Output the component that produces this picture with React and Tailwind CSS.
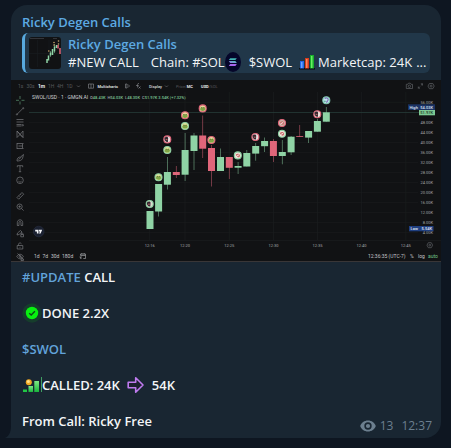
const UP = "#8fd3a5";
const DOWN = "#e0667a";

// [centre x, body top, body bottom, wick top, wick bottom, rising]
const candles = [
  [150, 211, 229, 211, 229, true],
  [158.6, 184, 211.5, 184, 216.5, true],
  [167.4, 172, 184.7, 157, 189.5, true],
  [176.3, 172, 175, 166, 178, false],
  [185.1, 150, 174.7, 133, 181, true],
  [194, 135.5, 151, 133, 170, true],
  [202.7, 135.5, 148.7, 115.5, 158, false],
  [211.5, 148, 171, 145, 186.5, false],
  [220.5, 157, 171, 148.5, 171, true],
  [229.3, 157, 167.8, 157, 179, false],
  [238.1, 166, 167.7, 162, 174, true],
  [246.8, 153, 166.5, 150, 166.5, true],
  [255.7, 146, 153.6, 143, 160.7, true],
  [264.6, 141, 146.2, 137.5, 152, true],
  [273.4, 141, 156, 139, 162, false],
  [282.3, 152, 156, 140, 164.3, true],
  [291.1, 136.7, 152.3, 136, 155, true],
  [299.7, 136.2, 137, 125, 137, false],
  [308.6, 131, 137.6, 131, 143, true],
  [317.4, 121, 131.7, 119, 131.7, true],
  [326.3, 112.3, 121.7, 107, 121.7, true],
];

// [x, y, ring, face, detail]
const markers = [
  [149.7, 204, UP, "#d9dccf", "mask"],
  [158.5, 177.2, UP, "#dfe39a", "frog"],
  [167.3, 150, UP, "#dfe39a", "frog"],
  [167.3, 139.4, DOWN, "#e8dfe0", "mask"],
  [185, 126, UP, "#dfe39a", "frog"],
  [185, 115.3, DOWN, "#e9d69a", "frog"],
  [202.7, 108.4, DOWN, "#e9d69a", "frog"],
  [211.4, 140, DOWN, "#e9d69a", "frog"],
  [237.8, 155.4, UP, "#efe3dc", "pink"],
  [255.4, 137, DOWN, "#e8dfe0", "mask"],
  [282, 123, DOWN, "#cbbcae", "pink"],
  [282, 133.8, UP, "#efe3dc", "pink"],
  [317.3, 114.2, DOWN, "#efe3dc", "mask"],
  [326.3, 100.3, "#7fc9b0", "#bfe3ea", "blue"],
];

const prices = [
  ["56.00K", 102.3], ["48.00K", 122.4], ["44.00K", 132.4], ["40.00K", 142.4],
  ["36.00K", 152.4], ["32.00K", 162.4], ["28.00K", 172.4], ["24.00K", 182.4],
  ["20.00K", 192.4], ["16.00K", 202.4], ["12.00K", 212.4], ["8.00K", 222.4], ["4.00K", 232.4],
];

const times = [
  ["12:16", 149.7], ["12:20", 185], ["12:25", 229.3], ["12:30", 273.5],
  ["12:35", 317.5], ["12:40", 361.6], ["12:45", 405.8],
];

function Marker({ x, y, ring, face, detail }) {
  return (
    <g transform={`translate(${x} ${y})`}>
      <circle r="3.5" fill={face} stroke={ring} strokeWidth="1.100" />
      {detail === "frog" && (
        <>
          <path d="M-2.6 .4c.8-1.6 4.2-1.8 5.1-.2.3 1.3-.9 2.4-2.5 2.4S-2.8 1.700-2.600.4Z" fill="#7fa546" />
          <path d="M-1.900-.8h1.500M.5-.8h1.400" stroke="#5c6a35" strokeWidth=".8" />
        </>
      )}
      {detail === "mask" && (
        <>
          <path d="M-2.800-1.400C-1.500-3 .5-3 .8-1.500L.6 2.500C-1.400 3-3.200 1-2.800-1.400Z" fill="#33272f" />
          <path d="M-1.600.2h1.700" stroke="#d56a6a" strokeWidth=".9" />
        </>
      )}
      {detail === "pink" && (
        <>
          <path d="M-2-.8C-1-2.200 2-2 2.200 0c0 1.500-1 2-2 1.800-.8-.2-2.400-1.200-2.200-2.600Z" fill="#c96f6c" />
          <path d="M-1.500.9 1.200-.6" stroke="#fff" strokeWidth=".8" />
        </>
      )}
      {detail === "blue" && (
        <>
          <path d="M-1.600-1.600C-.5-3 2-2.400 1.900-.6 1.800.8.300.7.300 2.400" fill="none" stroke="#7a6fb5" strokeWidth="1.100" />
          <circle cx="-1.400" cy="1" r=".9" fill="#5fae9a" />
        </>
      )}
    </g>
  );
}

function DrawingTools() {
  return (
    <g fill="none" stroke="#77797d" strokeWidth=".7">
      <path d="M20 96v3M20 101.500v3M16 100.300h3M21.500 100.300h3" stroke="#5f9a76" />
      <path d="M17.300 114 22.700 108.600" />
      <circle cx="16.900" cy="114.400" r=".6" />
      <circle cx="23.200" cy="108.200" r=".6" />
      <path d="M16.500 119.500h7M16.500 122h7M16.500 124.500h5M16.500 126h5" />
      <circle cx="22.800" cy="125.200" r=".7" />
      <path d="M17 137.500v-6.500l3 3.500 3-3.500v6.500l-3-3-3 3ZM17 131l6 6.500" />
      <path d="M17 143v6M17 143.500h6.500M17 148.500h6.500M18.500 146h4M22.500 144v4" />
      <path d="M17 161c0-3 1.500-4 3.500-4l3-2.500-1 4c-1 2-3 2.500-5.500 2.500ZM18.500 159.500l3-2.500" />
      <path d="M17.300 167.200v-1.500h5.400v1.500M20 165.700v6M18.800 171.700h2.400" />
      <circle cx="20" cy="180.300" r="3.300" />
      <path d="M18.500 181.300c.8 1 2.200 1 3 0M18.800 179.300v.3M21.200 179.300v.3" />
      <path d="m17 197.500 5-5 1.700 1.700-5 5ZM18.800 195.700l.9.9M20.300 194.200l.9.9" />
      <circle cx="19.600" cy="206.600" r="2.600" />
      <path d="m21.600 208.600 2 2M18.400 206.600h2.400M19.600 205.400v2.400" />
      <path d="M17.300 225.500v-3c0-3.600 5.400-3.600 5.400 0v3h-1.700v-3c0-1.400-2-1.400-2 0v3Z" />
      <path d="m17 235 .5-2 3-2.500 1.500 1.500-3 2.500Z" />
      <path d="M20.800 234.500h2.700v2.300h-2.700ZM21.400 234.500v-.8c0-1 1.500-1 1.500 0v.8" />
      <path d="M17.200 245.500h5.600v3.500h-5.600ZM18.500 245.500v-1.200c0-1.700 2.500-1.700 3-.5M20 246.800v1" />
      <path d="M16.800 256.500c1.500-3 5-3 6.500 0-1.500 3-5 3-6.500 0ZM21 259h2.500v1.500H21ZM17.500 253.500l5.500 5.500" />
      <circle cx="20" cy="256.500" r="1" />
    </g>
  );
}

function PriceChart() {
  return (
    <svg
      viewBox="11 80 430 182"
      className="block w-full font-['Roboto','Liberation_Sans',sans-serif]"
      role="img"
      aria-label="SWOL/USD candlestick chart"
    >
      <rect x="11" y="80" width="430" height="182" fill="#111214" />
      <rect x="11" y="261" width="430" height="1" fill="#393637" />

      <g stroke="#1a1c1e" strokeWidth=".7">
        {prices.map(([label, y]) => (
          <path key={label} d={`M29 ${y}H418`} />
        ))}
        {times.map(([label, x]) => (
          <path key={label} d={`M${x} 92V240`} />
        ))}
        <path d="M29 240.500H441" />
      </g>
      <path d="M29 112.500H419" stroke="#263b37" strokeWidth=".8" />

      <g fontSize="5" fill="#56585c">
        <text x="18" y="87.800">1s</text>
        <text x="26.500" y="87.800">30s</text>
        <text x="38" y="87.800" fill="#e8e8ea" fontWeight="700">1m</text>
        <text x="48" y="87.800">1H</text>
        <text x="57" y="87.800">4H</text>
        <text x="66.500" y="87.800">1D</text>
        <text x="97.500" y="87.800" fill="#dcdcde" fontWeight="700" fontSize="4">Multicharts</text>
        <text x="149" y="87.800" fill="#dcdcde" fontWeight="500" fontSize="4">Display</text>
        <text x="176" y="87.800" fontSize="4">Price/<tspan fill="#e8e8ea" fontWeight="700">MC</tspan></text>
        <text x="201" y="87.800" fontSize="4"><tspan fill="#e8e8ea" fontWeight="700">USD</tspan>/SOL</text>
      </g>
      <g fill="none" stroke="#8f9195" strokeWidth=".6">
        <path d="m77 85.500 1.500 1.500 1.500-1.500M165 85.500l1.500 1.500 1.500-1.500" stroke="#707276" />
        <path d="M88.500 84h5v4.200h-5ZM91 84v4.200" />
        <path d="M125.500 84h1.500v4h-1.500ZM128 84.500l1.500 1.500-1.500 1.500" />
        <path d="M139 83.500c-1.500-.5-1.500 1-1.500 4M136 85.500h2.800M138.500 86.500l2 2M140.500 86.500l-2 2" />
      </g>
      <g fill="none" stroke="#5f6165" strokeWidth=".7">
        <path d="M406.300 84.300h1.500l.7-1.100h1.800l.7 1.100h1.500v4.200h-6.200Z" />
        <circle cx="409.400" cy="86.300" r="1.200" />
        <path d="M420.800 83.800h1.700v1.700M422.500 83.800l-1.600 1.600M418.300 86.500v1.700h1.700M418.300 88.200l1.600-1.600" />
        <path d="m429.400 83.500h3.400l1.400 2.600-1.400 2.600h-3.400l-1.400-2.600Z" />
        <circle cx="431.100" cy="86.100" r="1" />
        <path d="m428.300 242.700h3l1.300 2.500-1.300 2.500h-3l-1.300-2.500Z" />
        <circle cx="429.800" cy="245.200" r=".9" />
      </g>

      <text x="32" y="99.400" fontSize="5" fill="#d0d1d4">SWOL/USD · 1 · GMGN.AI</text>
      <g fontSize="4" fontWeight="500" fill="#7cc494">
        <text x="90" y="99.200"><tspan fill="#a0a2a6">O</tspan>48.43K</text>
        <text x="107.500" y="99.200"><tspan fill="#a0a2a6">H</tspan>54.03K</text>
        <text x="125" y="99.200"><tspan fill="#a0a2a6">L</tspan>48.30K</text>
        <text x="142" y="99.200"><tspan fill="#a0a2a6">C</tspan>51.97K 3.54K (+7.32%)</text>
      </g>

      <DrawingTools />

      {candles.map(([x, top, bottom, high, low, rising]) => (
        <g key={x} fill={rising ? UP : DOWN}>
          <rect x={x - 0.4} y={high} width=".8" height={low - high} opacity=".6" />
          <rect x={x - 3.5} y={top} width="7" height={bottom - top} />
        </g>
      ))}
      {markers.map(([x, y, ring, face, detail]) => (
        <Marker key={`${x}-${y}`} x={x} y={y} ring={ring} face={face} detail={detail} />
      ))}

      <g fontSize="4" fill="#a2a4a8" textAnchor="end">
        {prices.map(([label, y]) => (
          <text key={label} x="433" y={y + 1.5}>{label}</text>
        ))}
      </g>
      <g fontSize="4" fontWeight="500">
        <rect x="408" y="104.300" width="27" height="5.700" fill="#1b3263" />
        <text x="409.500" y="108.600" fill="#dfe5f2">High</text>
        <text x="433" y="108.600" fill="#dfe5f2" textAnchor="end">54.03K</text>
        <rect x="419" y="110" width="16" height="5.300" fill="#7dc993" />
        <text x="433" y="114.200" fill="#17331f" textAnchor="end">51.97K</text>
        <rect x="409" y="226" width="24.500" height="5.300" fill="#1f3f80" />
        <text x="410.500" y="230.200" fill="#e5eaf5">Low</text>
        <text x="432" y="230.200" fill="#e5eaf5" textAnchor="end">5.54K</text>
      </g>

      <g fontSize="4" fill="#a5a7ab" textAnchor="middle">
        {times.map(([label, x]) => (
          <text key={label} x={x} y="246.600">{label}</text>
        ))}
      </g>

      <circle cx="38.700" cy="231.500" r="5.300" fill="#1a2030" stroke="#2a3145" strokeWidth=".6" />
      <path d="M35.200 229.800h3.300v3.800h-1.600v-2.200h-1.700ZM39 229.800h3.200l-1.600 3.800h-1.600l1-2.200h-1Z" fill="#f2f3f5" />

      <g fontSize="5" fill="#c3c4c8">
        <text x="34" y="257.900">1d</text>
        <text x="42.500" y="257.900">7d</text>
        <text x="51" y="257.900">30d</text>
        <text x="62" y="257.900">180d</text>
        <text x="368" y="257.900">12:36:35 (UTC-7)</text>
        <text x="410" y="257.900">%</text>
        <text x="418" y="257.900">log</text>
        <text x="428" y="257.900" fill="#6fc388">auto</text>
      </g>
      <path d="M80.500 255.500v-1.500h5v4.500h-2.200M80.500 257v1.500h1M80.500 255.500h5M81.800 253v1.500M84.200 253v1.500M79.500 257h2.500" fill="none" stroke="#9b9da1" strokeWidth=".7" />
    </svg>
  );
}

function ChartThumbnail() {
  return (
    <svg viewBox="0 0 32 32" className="size-8 shrink-0 rounded-[3px]" aria-hidden="true">
      <rect width="32" height="32" fill="#111214" />
      <path d="M1 1.500h14M24 1.500h4" stroke="#3c3e42" strokeWidth=".8" />
      <path d="M8.500 3v27M20 3v27M0 16.500h32" stroke="#1a1d20" strokeWidth=".6" />
      <path d="M18 22v4M19.500 18.500v5M21.500 15.500v3M23.500 12v6M25.500 9.500v5M27.500 8v3" stroke={UP} strokeWidth="1.500" />
      <path d="M21.500 14v6M25.500 7v9" stroke={UP} strokeWidth=".5" />
      <path d="M29 8v3.500M31 11v6" stroke={DOWN} strokeWidth="1.500" />
      <g fill="#c9a36a">
        <circle cx="19.800" cy="14" r=".8" />
        <circle cx="25" cy="5.500" r=".8" />
        <circle cx="25" cy="8" r=".8" />
        <circle cx="29.500" cy="4" r=".8" />
        <circle cx="29.500" cy="7" r=".8" />
      </g>
    </svg>
  );
}

function SolanaEmoji() {
  return (
    <svg viewBox="0 0 16 20" className="h-5 w-4 shrink-0" aria-hidden="true">
      <defs>
        <linearGradient id="sol" x1="0" y1="1" x2="1" y2="0">
          <stop offset="0" stopColor="#a45cf0" />
          <stop offset="1" stopColor="#3fd8b0" />
        </linearGradient>
      </defs>
      <ellipse cx="8" cy="10" rx="8" ry="10" fill="#05062a" />
      <path d="M5.200 6.200h6.600l-1.400 1.900h-6.600Z" fill="#43b6b4" />
      <path d="M3.800 9.100h6.600l1.400 1.900h-6.600Z" fill="url(#sol)" />
      <path d="M5.200 12h6.600l-1.400 1.900h-6.600Z" fill="#a864ee" />
    </svg>
  );
}

function BarsEmoji() {
  return (
    <svg viewBox="0 0 16 16" className="size-4 shrink-0" aria-hidden="true">
      <path d="M0 14h16v1.500H0Z" fill="#0b0f14" />
      <rect x="1" y="7" width="4" height="7.500" fill="#2467e8" />
      <rect x="2" y="8" width="1.500" height="6" fill="#69a5ff" />
      <rect x="6" y="4" width="4" height="10.500" fill="#d8391c" />
      <rect x="7" y="5" width="1.500" height="9" fill="#ff8a5c" />
      <rect x="11" y="1" width="4" height="13.500" fill="#18ad2b" />
      <rect x="12" y="2" width="1.500" height="12" fill="#69ef64" />
    </svg>
  );
}

function DoneEmoji() {
  return (
    <svg viewBox="0 0 20 20" className="size-5 shrink-0" aria-hidden="true">
      <circle cx="10" cy="10" r="9.700" fill="#163d2c" />
      <circle cx="10" cy="10" r="6.200" fill="#08f010" />
      <path d="m7.200 10.200 2 1.800 3.700-3.700" fill="none" stroke="#0a4a16" strokeWidth="1.400" />
    </svg>
  );
}

function GrowthEmoji() {
  return (
    <svg viewBox="0 0 20 18" className="h-[18px] w-5 shrink-0" aria-hidden="true">
      <defs>
        <linearGradient id="growth" x1="0" y1="0" x2="0" y2="1">
          <stop offset="0" stopColor="#7dea84" />
          <stop offset="1" stopColor="#18b53c" />
        </linearGradient>
      </defs>
      <rect x="1" y="13.500" width="4" height="2.500" fill="#20c745" />
      <rect x="6.500" y="10" width="4.500" height="6" fill="url(#growth)" />
      <rect x="12.300" y="5" width="4.700" height="11" fill="url(#growth)" />
      <rect x="19" y="1" width="1" height="15" fill="#3f9f63" />
      <circle cx="6.800" cy="6.200" r="3" fill="#f2a922" />
      <circle cx="6.400" cy="5.600" r="1.500" fill="#ffe08a" />
    </svg>
  );
}

function ArrowEmoji() {
  return (
    <svg viewBox="0 0 18 18" className="size-[18px] shrink-0" aria-hidden="true">
      <path d="M1.200 6.300h7.500V1.800L16 9l-7.300 7.200v-4.500H1.200Z" fill="#1d2030" stroke="#c07bf0" strokeWidth="1.600" strokeLinejoin="round" />
    </svg>
  );
}

function EyeIcon() {
  return (
    <svg viewBox="0 0 16 12" className="h-3 w-4" aria-hidden="true">
      <path fillRule="evenodd" fill="#6c7f8f" d="M8 .5c3.700 0 6.600 2.200 7.800 5.500-1.200 3.300-4.100 5.500-7.800 5.500S1.400 9.300.2 6C1.400 2.700 4.300.5 8 .5Zm0 1.800a3.700 3.700 0 1 0 0 7.400 3.700 3.700 0 0 0 0-7.400Zm0 1.600a2.100 2.100 0 1 1 0 4.200 2.100 2.100 0 0 1 0-4.200Z" />
    </svg>
  );
}

export default function App() {
  return (
    <main className="min-h-screen bg-[#0e1621] pt-[5px] pr-[10px] pb-[10px] pl-[11px] font-['Open_Sans','Noto_Sans',sans-serif] text-[13px] leading-[18px] text-[#f3f5f7]">
      <article className="relative rounded-2xl rounded-bl-none bg-[#192632] pt-2 pb-2">
        <svg viewBox="0 0 6 12" className="absolute bottom-0 -left-1.5 h-3 w-1.5" aria-hidden="true">
          <path d="M6 0v12H0c4-2 6-6 6-12Z" fill="#192632" />
        </svg>

        <h1 className="px-[11px] font-semibold text-[#5daae2]">Ricky Degen Calls</h1>

        <a href="#original" className="mx-[11px] mt-0.5 mb-[7px] flex h-10 items-center gap-[7px] overflow-hidden rounded-md border-l-[3px] border-[#58a9de] bg-[#213749] pl-1">
          <ChartThumbnail />
          <span className="flex min-w-0 flex-col">
            <span className="font-semibold text-[#5daae2]">Ricky Degen Calls</span>
            <span className="flex h-[18px] items-center whitespace-nowrap">
              <span>#NEW CALL</span>
              <span className="ml-3">Chain: #SOL</span>
              <SolanaEmoji />
              <span className="ml-2">$SWOL</span>
              <span className="ml-[7px]"><BarsEmoji /></span>
              <span className="ml-[3px]">Marketcap: 24K</span>
              <span className="ml-1">...</span>
            </span>
          </span>
        </a>

        <PriceChart />

        <div className="grid gap-[18px] px-[11px] pt-1.5 font-semibold">
          <p><a href="#update" className="text-[#62a3da]">#UPDATE</a> CALL</p>
          <p className="flex h-[18px] items-center"><DoneEmoji /><span>DONE 2.2X</span></p>
          <p><a href="#swol" className="text-[#62a3da]">$SWOL</a></p>
          <p className="flex h-[18px] items-center">
            <GrowthEmoji />
            <span>CALLED: 24K</span>
            <span className="mx-[7px]"><ArrowEmoji /></span>
            <span>54K</span>
          </p>
          <p>From Call: Ricky Free</p>
        </div>

        <footer className="absolute right-[9px] bottom-[3px] flex items-center text-[12px] text-[#6c7f8f]">
          <EyeIcon />
          <span className="ml-1">13</span>
          <time className="ml-2">12:37</time>
        </footer>
      </article>
    </main>
  );
}
